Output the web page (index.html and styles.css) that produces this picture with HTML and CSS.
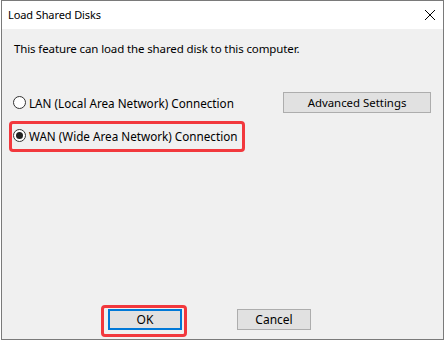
FILE: index.html
```html
<!DOCTYPE html>
<html>
<head>
<meta charset="utf-8">
<title>Load Shared Disks</title>
<link rel="stylesheet" href="styles.css">
</head>
<body>
<div class="window">
  <div class="titlebar">
    <span class="title">Load Shared Disks</span>
    <svg class="close" width="12" height="12" viewBox="0 0 12 12"><path d="M1 1 L11 11 M11 1 L1 11" stroke="#000" stroke-width="1" fill="none"/></svg>
  </div>
  <div class="body">
    <p class="desc">This feature can load the shared disk to this computer.</p>
    <div class="row row-lan">
      <label class="radio"><span class="circle"></span><span class="label">LAN (Local Area Network) Connection</span></label>
      <button class="btn btn-adv">Advanced Settings</button>
    </div>
    <div class="row row-wan">
      <label class="radio highlight"><span class="circle checked"></span><span class="label">WAN (Wide Area Network) Connection</span></label>
    </div>
    <div class="actions">
      <button class="btn btn-ok highlight">OK</button>
      <button class="btn btn-cancel">Cancel</button>
    </div>
  </div>
</div>
</body>
</html>
```
FILE: styles.css
```css
* { box-sizing: border-box; }
html, body { margin: 0; padding: 0; background: #fff; }
body {
  font-family: "Noto Sans", "Open Sans", sans-serif;
  font-size: 12px;
  color: #000;
}
.window {
  margin-left: 1px;
  width: 443px;
  height: 340px;
  border: 1px solid #7a7a7a;
  display: flex;
  flex-direction: column;
}
.titlebar {
  height: 28px;
  background: #fff;
  display: flex;
  align-items: center;
  justify-content: space-between;
  padding-left: 6px;
  padding-right: 7px;
}
.title { font-size: 11px; line-height: 16px; letter-spacing: -0.1px; }
.close { display: block; }
.body {
  flex: 1;
  background: #f0f0f0;
  display: flex;
  flex-direction: column;
  padding: 0 11px 0 11px;
}
.desc {
  margin: 11px 0 0 1px;
  line-height: 17px;
  font-size: 11.5px;
  letter-spacing: -0.12px;
}
.row {
  display: flex;
  align-items: center;
  justify-content: space-between;
  height: 21px;
}
.row-lan { margin-top: 35px; }
.row-wan { margin-top: 12px; }
.radio {
  display: inline-flex;
  align-items: center;
  gap: 3px;
  line-height: 16px;
  font-size: 11.7px;
}
.circle {
  width: 13px;
  height: 13px;
  border: 1px solid #333;
  border-radius: 50%;
  background: #fff;
  display: inline-flex;
  align-items: center;
  justify-content: center;
}
.circle.checked::before {
  content: "";
  width: 7px;
  height: 7px;
  border-radius: 50%;
  background: #222;
}
.btn {
  font-family: inherit;
  font-size: 12px;
  color: #000;
  background: #e1e1e1;
  border: 1px solid #adadad;
  height: 21px;
  padding: 0;
  line-height: 17px;
}
.btn-adv { width: 148px; margin-right: 1px; font-size: 11.4px; }
.actions {
  margin-top: auto;
  margin-bottom: 9px;
  display: flex;
  padding-left: 95px;
  gap: 55px;
}
.btn-ok, .btn-cancel { width: 74px; }
.btn-ok { border: 2px solid #0078d7; }
.highlight { position: relative; }
.highlight::after {
  content: "";
  position: absolute;
  border: 3px solid #f2383d;
  border-radius: 4px;
  pointer-events: none;
}
.radio.highlight::after { left: -4px; right: -8px; top: -7px; bottom: -8px; }
.btn-ok.highlight::after { left: -9px; right: -7px; top: -6px; bottom: -9px; }
```
